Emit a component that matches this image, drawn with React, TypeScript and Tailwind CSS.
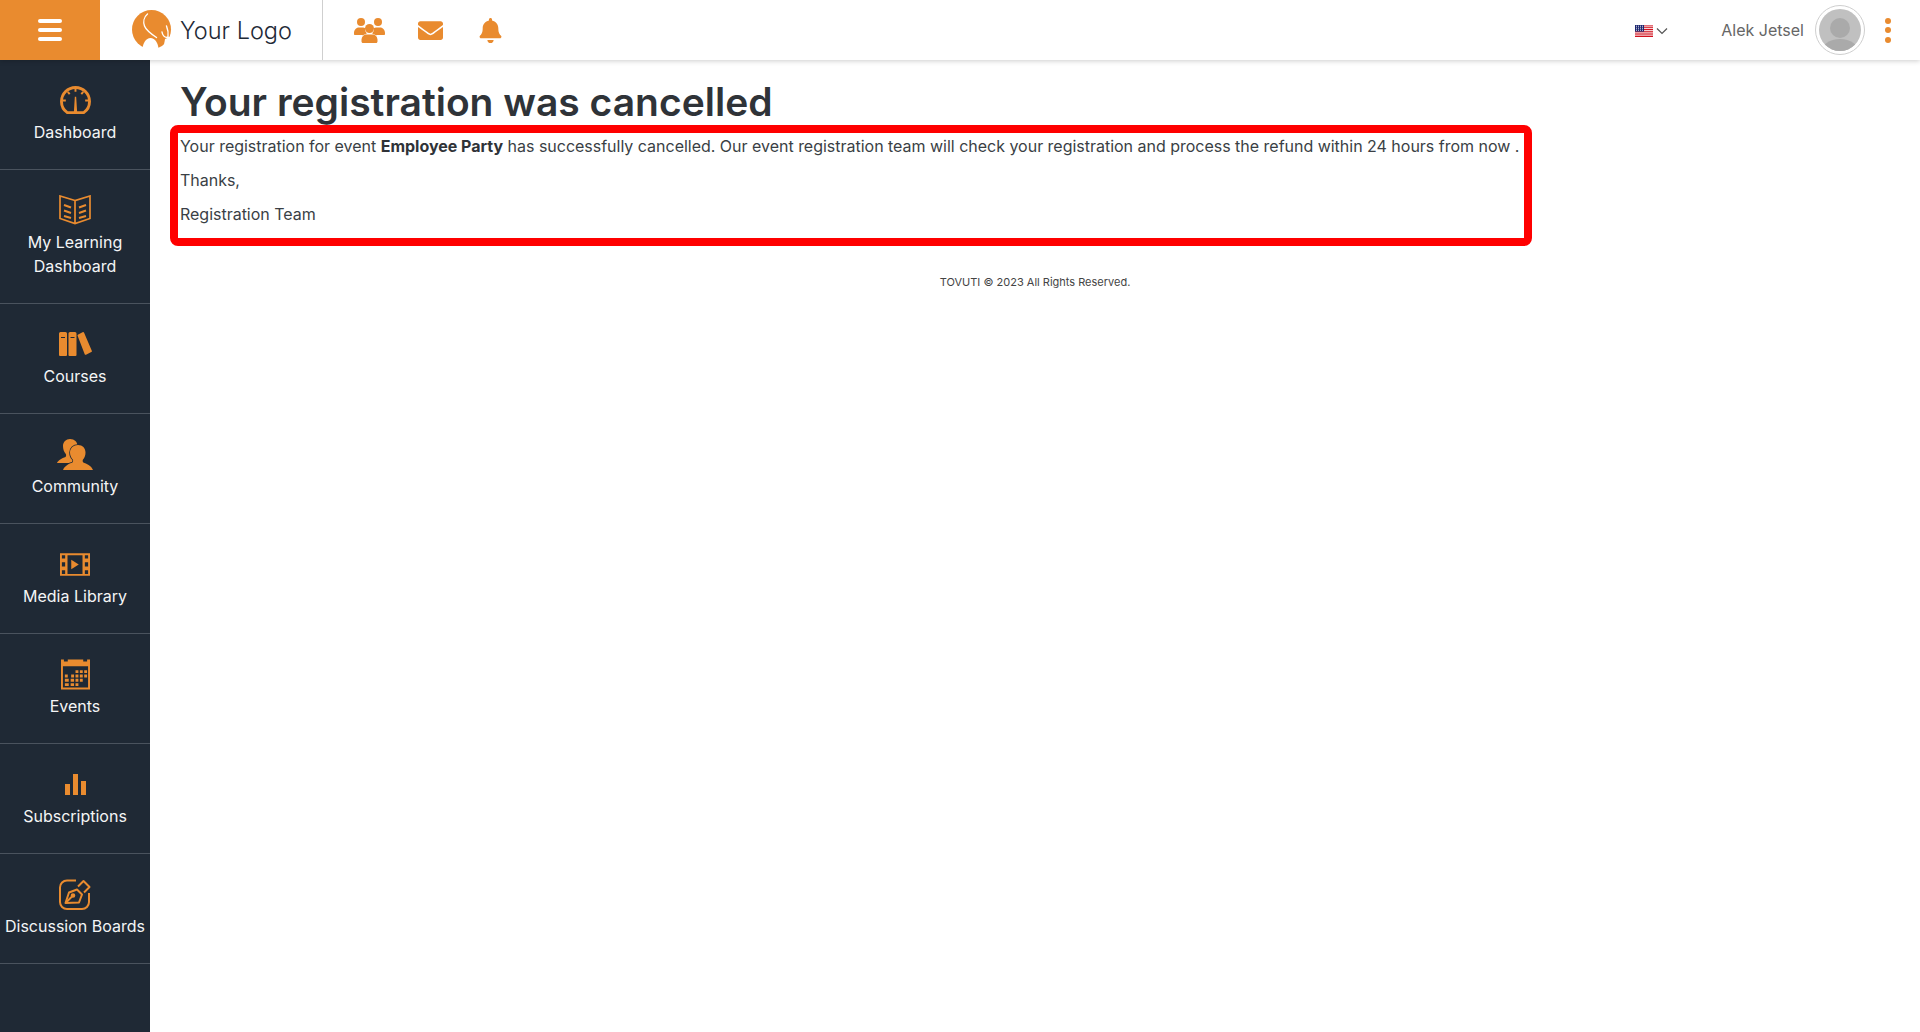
import { FaBell, FaEnvelope } from 'react-icons/fa';
import { ReactNode } from 'react';

const orange = '#e98b2f';

function LogoMark() {
  return (
    <svg width="42" height="40" viewBox="0 0 42 40">
      <circle cx="19.500" cy="19.500" r="19.500" fill={orange} />
      <path d="M30 39c2-3 2.500-7 3-10l5-2 3 1c-1 5-5 9-8 11z" fill="#fff" />
      <path d="M10.500 40c0-7 3.500-12 8-12s8 5 8 12z" fill="#fff" />
      <path
        d="M15.500 4c-3.500 3-4.500 8-3 12 1.500 4 6 7.500 12 11.500M34.500 16c1.500 3.500 2 7.500 1.500 11.500M30 22c.5 3 2 5 5 5.500 2 .3 3.500 0 5-1"
        fill="none"
        stroke="#fff"
        strokeWidth="1.400"
        strokeLinecap="round"
      />
    </svg>
  );
}

function Flag() {
  return (
    <svg width="18" height="12" viewBox="0 0 18 12">
      <rect width="18" height="12" fill="#fff" />
      <path d="M0 .9h18M0 2.700h18M0 4.500h18M0 6.300h18M0 8.100h18M0 9.900h18M0 11.500h18" stroke="#d1121f" strokeWidth="1" />
      <rect width="9" height="6.600" fill="#1c2670" />
      <path d="M1 1.200h7M1 3.200h7M1 5.200h7" stroke="#fff" strokeWidth=".9" strokeDasharray="1 1" />
    </svg>
  );
}

function UsersIcon() {
  return (
    <svg width="31" height="25" viewBox="0 0 31 25" fill={orange}>
      <circle cx="7" cy="4" r="4" />
      <circle cx="24" cy="4" r="4" />
      <circle cx="15.500" cy="10.500" r="4.500" />
      <path d="M0 15c0-3 2-5.500 5-5.500h4c.8 0 1.300.2 2 .5-.3 2 .5 4 2 5.300C10.500 16.500 8.800 18 8 17H1c-.6 0-1-.4-1-1z" />
      <path d="M31 15c0-3-2-5.500-5-5.500h-4c-.8 0-1.300.2-2 .5.300 2-.5 4-2 5.300 2.500 1.200 4.200 2.700 5 1.700h7c.6 0 1-.4 1-1z" />
      <path d="M12 16.500h7c2.500 0 4.500 2.500 4.500 5.500v1.500c0 .8-.6 1.500-1.500 1.500H9c-.9 0-1.500-.7-1.500-1.500V22c0-3 2-5.500 4.500-5.500z" />
    </svg>
  );
}

function GaugeIcon() {
  return (
    <svg width="31" height="29" viewBox="0 0 32 30" fill="none" stroke={orange} strokeWidth="3">
      <path d="M7.500 27.500C3.800 25 1.500 20.800 1.500 16a14.500 14.500 0 0 1 29 0c0 4.800-2.300 9-6 11.500z" />
      <path d="M16 3v3M8 6l2 2.500M24 6l-2 2.500M3 15h3M26 15h3" strokeWidth="2" />
      <path d="M15.300 11h1.400l1 16h-3.400z" fill={orange} stroke="none" />
    </svg>
  );
}

function BookIcon() {
  return (
    <svg width="32" height="30" viewBox="0 0 32 30" fill="none" stroke={orange} strokeWidth="1.700">
      <path d="M16 5.500 1 1v22.500L16 28.500 31 23.500V1zM16 5.500v23" />
      <path d="M5 10l7 2.500M5 15.500l7 2.500M5 21l7 2M27 10l-7 2.500M27 15.500l-7 2.500M27 21l-7 2" strokeWidth="2" />
    </svg>
  );
}

function BooksIcon() {
  return (
    <svg width="34" height="24" viewBox="0 0 34 24" fill={orange}>
      <path d="M1 1.500A1.500 1.500 0 0 1 2.500 0h5A1.500 1.500 0 0 1 9 1.500V23a1 1 0 0 1-1 1H2a1 1 0 0 1-1-1zM3 5v1h4V5z" fillRule="evenodd" />
      <path d="M10.500 1.500A1.500 1.500 0 0 1 12 0h5a1.500 1.500 0 0 1 1.500 1.500V23a1 1 0 0 1-1 1h-6a1 1 0 0 1-1-1zM12.500 5v1h4V5z" fillRule="evenodd" />
      <path d="M20.200 2.400 24.500.3a1.200 1.200 0 0 1 1.600.5L33.800 18.800a1 1 0 0 1-.5 1.300L28 22.700a1 1 0 0 1-1.300-.5L19.700 4a1.200 1.200 0 0 1 .5-1.600z" />
    </svg>
  );
}

function CommunityIcon() {
  return (
    <svg width="36" height="31" viewBox="0 0 36 31" fill={orange}>
      <path d="M13 0c4.500 0 7.500 3 7.500 7 0 3-1 6-2.500 7.500-.5 1-.5 2 .3 3L20 24H0c1-2.500 5-5 8.500-6 .8-1 .8-2 .3-3C7 13 6 10 6 7c0-4 3-7 7-7z" />
      <path
        d="M21 6c4.500 0 7.500 3 7.500 7.500 0 3-1 5.500-2.500 7-.5 1-.5 2 .3 3 3 1 8 3 9.700 7.500H6c1.500-4 6-6.500 9.500-7.500.8-1 .8-2 .3-3-1.500-1.500-2.800-4-2.800-7C13 9 16.500 6 21 6z"
        stroke="#1f2935"
        strokeWidth="1.500"
        paintOrder="stroke"
      />
    </svg>
  );
}

function FilmIcon() {
  return (
    <svg width="30" height="23" viewBox="0 0 32 24" fill={orange}>
      <path
        fillRule="evenodd"
        d="M0 0h32v24H0zM2 2v3.500h3.500V2zM2 9.500V14h3.500V9.500zM2 18v4h3.500v-4zM26.500 2v3.500H30V2zM26.500 9.500V14H30V9.500zM26.500 18v4H30v-4zM8 2v20h16V2z"
      />
      <path d="M12 7l8 5-8 5z" />
    </svg>
  );
}

function CalendarIcon() {
  return (
    <svg width="29" height="31" viewBox="0 0 30 31" fill={orange}>
      <path fillRule="evenodd" d="M0 0h3v2h4V0h16v2h4V0h3v31H0zM2 7v22h26V7z" />
      <path d="M15 11h3v3h-3zM19.500 11h3v3h-3zM24 11h3v3h-3zM10.500 15.500h3v3h-3zM15 15.500h3v3h-3zM19.500 15.500h3v3h-3zM24 15.500h3v3h-3zM4 15.500h3v3H4zM4 20h4v3H4zM10 20h3.500v3H10zM15 20h3v3h-3zM19.500 20h3v3h-3zM4 24.500h4v3H4zM10 24.500h3.500v3H10zM15 24.500h3v3h-3z" />
    </svg>
  );
}

function BarsIcon() {
  return (
    <svg width="21" height="21" viewBox="0 0 21 21" fill={orange}>
      <path d="M0 10h5v11H0zM8 0h5v21H8zM16 7h5v14h-5z" />
    </svg>
  );
}

function PenBoxIcon() {
  return (
    <svg width="32" height="31" viewBox="0 0 32 31" fill="none" stroke={orange} strokeWidth="2">
      <path d="M17 1.500H8a7 7 0 0 0-7 7V23a7 7 0 0 0 7 7h15a7 7 0 0 0 7-7v-9" />
      <path d="M6.500 24 10 13.500l8-3 5 5-3 8z" strokeLinejoin="round" />
      <path d="M6.500 24l6.500-6.500" />
      <circle cx="14" cy="16.500" r="1.300" fill={orange} />
      <path d="M19 7.500 24.500 2l6 6-5.500 5.500" strokeLinejoin="round" />
    </svg>
  );
}

function NavItem({ icon, label }: { icon: ReactNode; label: string }) {
  return (
    <a className="flex flex-col items-center border-b border-[#4a535e] pt-[21px] pb-[25px] text-center text-[16px] leading-[24px] font-normal text-[#f4f5f6]">
      <div className="mb-[1px] flex h-[38px] items-center justify-center">{icon}</div>
      <span>{label}</span>
    </a>
  );
}

const navItems: { icon: ReactNode; label: string }[] = [
  { icon: <GaugeIcon />, label: 'Dashboard' },
  { icon: <BookIcon />, label: 'My Learning Dashboard' },
  { icon: <BooksIcon />, label: 'Courses' },
  { icon: <CommunityIcon />, label: 'Community' },
  { icon: <FilmIcon />, label: 'Media Library' },
  { icon: <CalendarIcon />, label: 'Events' },
  { icon: <BarsIcon />, label: 'Subscriptions' },
  { icon: <PenBoxIcon />, label: 'Discussion Boards' },
];

export default function App() {
  return (
    <div className="flex h-[1032px] flex-col overflow-hidden bg-white font-['Inter',sans-serif]">
      {/* Top bar */}
      <header className="z-10 flex h-[60px] shrink-0 items-center bg-white shadow-[0_1px_5px_rgba(0,0,0,0.2)]">
        <button className="flex h-full w-[100px] flex-col items-center justify-center gap-[5px] bg-[#e98b2f]">
          <span className="h-[4px] w-[24px] rounded-full bg-white" />
          <span className="h-[4px] w-[24px] rounded-full bg-white" />
          <span className="h-[4px] w-[24px] rounded-full bg-white" />
        </button>
        <div className="flex h-full w-[223px] items-center gap-[6px] border-r border-[#cfcfcf] pl-[32px]">
          <LogoMark />
          <span className="mt-[2px] text-[23.500px] leading-none font-light text-[#1f2a37]">Your Logo</span>
        </div>
        <div className="flex items-center gap-[33px] pl-[31px] text-[#e98b2f]">
          <UsersIcon />
          <FaEnvelope size={25} />
          <FaBell size={25} className="ml-[2px]" />
        </div>
        <div className="ml-auto flex items-center">
          <div className="mt-[1px] flex items-center">
            <Flag />
            <svg className="ml-[3px]" width="12" height="8" viewBox="0 0 12 8" fill="none" stroke="#555" strokeWidth="1.200">
              <path d="M1 1.500 6 6.500 11 1.500" />
            </svg>
          </div>
          <span className="ml-[53px] text-[16px] text-[#666]">Alek Jetsel</span>
          <div className="ml-[11px] flex h-[50px] w-[50px] items-center justify-center rounded-full border border-[#cfcfcf]">
            <svg width="42" height="42" viewBox="0 0 42 42">
              <clipPath id="avatar">
                <circle cx="21" cy="21" r="21" />
              </clipPath>
              <g clipPath="url(#avatar)">
                <rect width="42" height="42" fill="#c0c0c0" />
                <circle cx="21" cy="19" r="10" fill="#aaaaaa" />
                <ellipse cx="21" cy="44" rx="19" ry="14" fill="#aaaaaa" />
              </g>
            </svg>
          </div>
          <div className="mr-[29px] ml-[20px] flex flex-col gap-[3.500px]">
            <span className="h-[6px] w-[6px] rounded-full bg-[#e98b2f]" />
            <span className="h-[6px] w-[6px] rounded-full bg-[#e98b2f]" />
            <span className="h-[6px] w-[6px] rounded-full bg-[#e98b2f]" />
          </div>
        </div>
      </header>

      <div className="flex min-h-0 flex-1">
        {/* Sidebar */}
        <nav className="w-[150px] shrink-0 bg-[#1f2935]">
          {navItems.map((item) => (
            <NavItem key={item.label} icon={item.icon} label={item.label} />
          ))}
        </nav>

        {/* Main content */}
        <main className="flex-1 pt-[18px] text-[#333]">
          <div className="ml-[20px] w-[1362px]">
            <h1 className="pl-[10px] text-[39px] leading-[47px] font-semibold text-[#2f3338]">
              Your registration was cancelled
            </h1>
            <div className="h-[121px] rounded-[8px] border-[8px] border-[#ff0000] pl-[2px] text-[16px] leading-[34px] tracking-[-0.015px] text-[#3a3f45]">
              <p className="-mt-[4px]">
                Your registration for event <strong className="font-bold text-[#2f3338]">Employee Party</strong> has
                successfully cancelled. Our event registration team will check your registration and process the refund
                within 24 hours from now .
              </p>
              <p>Thanks,</p>
              <p>Registration Team</p>
            </div>
          </div>
          <p className="mt-[28px] text-center text-[11px] text-[#444]">TOVUTI © 2023 All Rights Reserved.</p>
        </main>
      </div>
    </div>
  );
}
